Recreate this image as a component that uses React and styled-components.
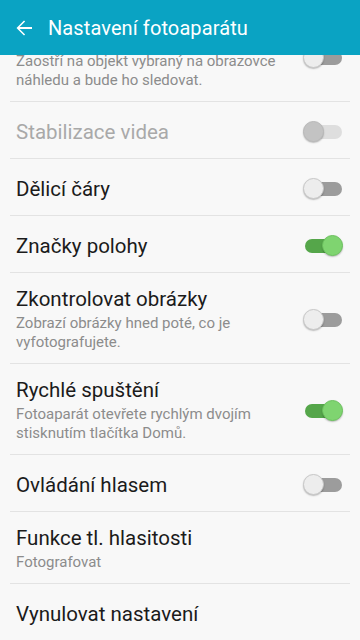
import React from 'react'
import styled, { createGlobalStyle } from 'styled-components'

const Global = createGlobalStyle`
  html, body {
    margin: 0;
    padding: 0;
    background: #f8f8f8;
  }
  body {
    font-family: Roboto, "Noto Sans", "Liberation Sans", sans-serif;
    -webkit-font-smoothing: antialiased;
  }
`

const Screen = styled.div`
  width: 360px;
  height: 640px;
  display: flex;
  flex-direction: column;
  background: #f8f8f8;
  overflow: hidden;
`

const Toolbar = styled.header`
  height: 55px;
  flex: none;
  display: flex;
  align-items: center;
  background: #0aa3c3;
  color: #fff;
  position: relative;
  z-index: 2;
`

const BackBtn = styled.button`
  border: 0;
  background: none;
  padding: 0;
  margin: 0 12px;
  width: 24px;
  height: 24px;
  color: #fff;
  display: flex;
`

const Title = styled.h1`
  margin: 1px 0 0;
  font-size: 20px;
  font-weight: 400;
  letter-spacing: 0.1px;
`

const Viewport = styled.div`
  flex: 1;
  overflow: hidden;
`

const List = styled.div`
  margin-top: -44px;
`

const Row = styled.div`
  display: flex;
  align-items: center;
  min-height: 57px;
  padding: 14px 18px 12px 16px;
  box-sizing: border-box;
  position: relative;
  &:not(:last-child)::after {
    content: '';
    position: absolute;
    left: 10px;
    right: 10px;
    bottom: 0;
    height: 1px;
    background: #e3e3e3;
  }
`

const Texts = styled.div`
  flex: 1;
  min-width: 0;
`

const Label = styled.div`
  font-size: 20.5px;
  line-height: 24px;
  color: ${p => (p.disabled ? '#a9a9a9' : '#1b1b1b')};
`

const Sub = styled.div`
  font-size: 15px;
  line-height: 19px;
  margin-top: 3px;
  color: #8c8c8c;
`

const Switch = styled.div`
  flex: none;
  width: 39px;
  height: 22px;
  position: relative;
  margin-left: 8px;
`

const Track = styled.div`
  position: absolute;
  left: 2px;
  right: 0;
  top: 4px;
  height: 14px;
  border-radius: 7px;
  background: ${p => (p.on ? '#55a64a' : p.disabled ? '#dedede' : '#9c9c9c')};
`

const Thumb = styled.div`
  position: absolute;
  top: 0;
  ${p => (p.on ? 'right: -1px;' : 'left: 0;')}
  width: 21px;
  height: 21px;
  border-radius: 50%;
  box-sizing: border-box;
  background: ${p => (p.on ? '#7fd470' : p.disabled ? '#c3c3c3' : '#ededed')};
  border: 1px solid ${p => (p.on ? '#6cc25e' : p.disabled ? '#b9b9b9' : '#c8c8c8')};
  box-shadow: 0 1px 1.5px rgba(0, 0, 0, 0.25);
`

const Toggle = ({ on, disabled }) => (
  <Switch>
    <Track on={on} disabled={disabled} />
    <Thumb on={on} disabled={disabled} />
  </Switch>
)

const items = [
  { title: 'Sledování AF', sub: 'Zaostří na objekt vybraný na obrazovce náhledu a bude ho sledovat.', toggle: 'off' },
  { title: 'Stabilizace videa', toggle: 'disabled', disabled: true },
  { title: 'Dělicí čáry', toggle: 'off' },
  { title: 'Značky polohy', toggle: 'on' },
  { title: 'Zkontrolovat obrázky', sub: 'Zobrazí obrázky hned poté, co je vyfotografujete.', toggle: 'off' },
  { title: 'Rychlé spuštění', sub: 'Fotoaparát otevřete rychlým dvojím stisknutím tlačítka Domů.', toggle: 'on' },
  { title: 'Ovládání hlasem', toggle: 'off' },
  { title: 'Funkce tl. hlasitosti', sub: 'Fotografovat' },
  { title: 'Vynulovat nastavení' },
]

export default function App() {
  return (
    <Screen>
      <Global />
      <Toolbar>
        <BackBtn aria-label="Zpět">
          <svg width="24" height="24" viewBox="0 0 24 24" fill="currentColor">
            <path d="M20 11.1H7.6l5.5-5.5L12 4.5 4.5 12l7.5 7.5 1.1-1.1-5.5-5.5H20z" />
          </svg>
        </BackBtn>
        <Title>Nastavení fotoaparátu</Title>
      </Toolbar>
      <Viewport>
        <List>
          {items.map(it => (
            <Row key={it.title}>
              <Texts>
                <Label disabled={it.disabled}>{it.title}</Label>
                {it.sub && <Sub>{it.sub}</Sub>}
              </Texts>
              {it.toggle && <Toggle on={it.toggle === 'on'} disabled={it.toggle === 'disabled'} />}
            </Row>
          ))}
        </List>
      </Viewport>
    </Screen>
  )
}
